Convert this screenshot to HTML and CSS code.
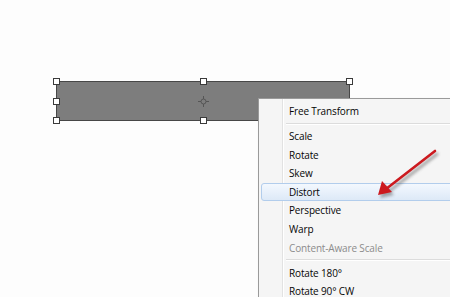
FILE: index.html
```html
<!DOCTYPE html>
<html>
<head>
<meta charset="utf-8">
<link rel="stylesheet" href="styles.css">
</head>
<body>
<div class="canvas">
  <div class="shape">
    <span class="handle h-tl"></span>
    <span class="handle h-tm"></span>
    <span class="handle h-tr"></span>
    <span class="handle h-ml"></span>
    <span class="handle h-bl"></span>
    <span class="handle h-bm"></span>
    <svg class="pivot" width="11" height="11" viewBox="0 0 11 11">
      <circle cx="5.5" cy="5.5" r="2.5" fill="none" stroke="#555" stroke-width="1"/>
      <path d="M5.5 0v3M5.5 8v3M0 5.5h3M8 5.5h3" stroke="#555" stroke-width="1"/>
    </svg>
  </div>
  <div class="menu">
    <ul class="group">
      <li class="item">Free Transform</li>
    </ul>
    <div class="sep"></div>
    <ul class="group">
      <li class="item">Scale</li>
      <li class="item">Rotate</li>
      <li class="item">Skew</li>
      <li class="item active">Distort</li>
      <li class="item">Perspective</li>
      <li class="item">Warp</li>
      <li class="item disabled">Content-Aware Scale</li>
    </ul>
    <div class="sep"></div>
    <ul class="group">
      <li class="item">Rotate 180°</li>
      <li class="item">Rotate 90° CW</li>
    </ul>
  </div>
  <svg class="arrow" width="80" height="70" viewBox="0 0 80 70">
    <defs>
      <filter id="sh" x="-30%" y="-30%" width="160%" height="160%">
        <feGaussianBlur stdDeviation="1.6"/>
      </filter>
    </defs>
    <g transform="translate(2,3)" opacity="0.45" filter="url(#sh)">
      <path d="M63 6 L14 44" stroke="#444" stroke-width="3" stroke-linecap="round"/>
      <path d="M6 50 L10 36 L20 47 Z" fill="#444"/>
    </g>
    <path d="M63 6 L14 44" stroke="#cc1a1f" stroke-width="2.6" stroke-linecap="round"/>
    <path d="M6 50 L10 36 L20 47 Z" fill="#cc1a1f"/>
  </svg>
</div>
</body>
</html>
```
FILE: styles.css
```css
html, body {
  margin: 0;
  padding: 0;
  background: #ffffff;
}
.canvas {
  position: relative;
  width: 450px;
  height: 297px;
  overflow: hidden;
  background: #fdfdfd;
  font-family: "Open Sans", "Noto Sans", sans-serif;
}
.shape {
  position: absolute;
  left: 56px;
  top: 81px;
  width: 292px;
  height: 38px;
  background: #7d7d7d;
  border: 1px solid #474747;
}
.handle {
  position: absolute;
  width: 5px;
  height: 5px;
  background: #fff;
  border: 1px solid #3a3a3a;
}
.h-tl { left: -4px; top: -4px; }
.h-tm { left: 143px; top: -4px; }
.h-tr { left: 289px; top: -4px; }
.h-ml { left: -4px; top: 16px; }
.h-bl { left: -4px; top: 35px; }
.h-bm { left: 143px; top: 35px; }
.pivot {
  position: absolute;
  left: 141px;
  top: 14px;
}
.menu {
  position: absolute;
  left: 258px;
  top: 98px;
  width: 230px;
  height: 230px;
  background: #f5f5f5;
  border: 1px solid #9a9a9a;
  box-shadow: 2px 2px 3px rgba(0,0,0,0.2);
  padding-top: 3px;
  box-sizing: border-box;
  background-image: linear-gradient(to right, transparent 23px, #e2e2e2 23px, #e2e2e2 24px, #ffffff 24px, #ffffff 25px, transparent 25px);
}
.group {
  list-style: none;
  margin: 0;
  padding: 0;
}
.item {
  height: 18.6px;
  margin: 0 2px;
  padding-left: 27px;
  font-size: 10px;
  font-weight: 500;
  letter-spacing: -0.15px;
  color: #050505;
  white-space: nowrap;
  box-sizing: border-box;
  border: 1px solid transparent;
  line-height: 16.6px;
}
.item.active {
  border: 1px solid #b2cdec;
  border-radius: 3px;
  background: linear-gradient(to bottom, #f3f8fe, #dde9f7);
}
.item.disabled {
  color: #8c8c8c;
}
.sep {
  height: 6.4px;
  margin-left: 27px;
  background: linear-gradient(to bottom, transparent 2px, #dcdcdc 2px, #dcdcdc 3px, #ffffff 3px, #ffffff 4px, transparent 4px);
}
.arrow {
  position: absolute;
  left: 372px;
  top: 145px;
}
```
